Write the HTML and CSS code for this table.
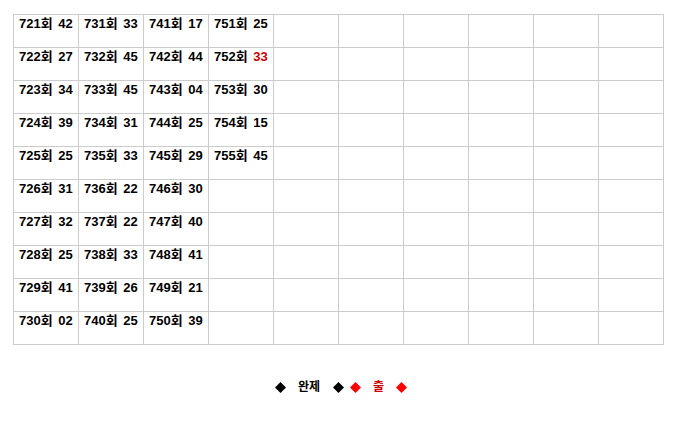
FILE: index.html
```html
<!DOCTYPE html>
<html lang="ko">
<head>
<meta charset="utf-8">
<link rel="stylesheet" href="styles.css">
</head>
<body>
<table class="grid">
<tr><td>721회 42</td><td>731회 33</td><td>741회 17</td><td>751회 25</td><td></td><td></td><td></td><td></td><td></td><td></td></tr>
<tr><td>722회 27</td><td>732회 45</td><td>742회 44</td><td>752회 <span class="hit">33</span></td><td></td><td></td><td></td><td></td><td></td><td></td></tr>
<tr><td>723회 34</td><td>733회 45</td><td>743회 04</td><td>753회 30</td><td></td><td></td><td></td><td></td><td></td><td></td></tr>
<tr><td>724회 39</td><td>734회 31</td><td>744회 25</td><td>754회 15</td><td></td><td></td><td></td><td></td><td></td><td></td></tr>
<tr><td>725회 25</td><td>735회 33</td><td>745회 29</td><td>755회 45</td><td></td><td></td><td></td><td></td><td></td><td></td></tr>
<tr><td>726회 31</td><td>736회 22</td><td>746회 30</td><td></td><td></td><td></td><td></td><td></td><td></td><td></td></tr>
<tr><td>727회 32</td><td>737회 22</td><td>747회 40</td><td></td><td></td><td></td><td></td><td></td><td></td><td></td></tr>
<tr><td>728회 25</td><td>738회 33</td><td>748회 41</td><td></td><td></td><td></td><td></td><td></td><td></td><td></td></tr>
<tr><td>729회 41</td><td>739회 26</td><td>749회 21</td><td></td><td></td><td></td><td></td><td></td><td></td><td></td></tr>
<tr><td>730회 02</td><td>740회 25</td><td>750회 39</td><td></td><td></td><td></td><td></td><td></td><td></td><td></td></tr>
</table>
<div class="legend">
<svg class="dia" viewBox="0 0 11 11"><polygon points="5.5,0 11,5.5 5.5,11 0,5.5" fill="#000"/></svg>
<span class="lbl">완제</span>
<svg class="dia d2" viewBox="0 0 11 11"><polygon points="5.5,0 11,5.5 5.5,11 0,5.5" fill="#000"/></svg>
<svg class="dia d3" viewBox="0 0 11 11"><polygon points="5.5,0 11,5.5 5.5,11 0,5.5" fill="#ff0000"/></svg>
<span class="lbl red2">출</span>
<svg class="dia" viewBox="0 0 11 11"><polygon points="5.5,0 11,5.5 5.5,11 0,5.5" fill="#ff0000"/></svg>
</div>
</body>
</html>
```
FILE: styles.css
```css
body {
  margin: 14px 0 0 13px;
  font-family: "Liberation Sans", "Noto Sans CJK KR", sans-serif;
  font-size: 13px;
  font-weight: bold;
  color: #000;
}
.grid {
  border-collapse: collapse;
  table-layout: fixed;
  width: 651px;
}
.grid td {
  width: 64px;
  height: 33px;
  box-sizing: border-box;
  border: 1px solid #cccccc;
  padding: 1px 0 0 5px;
  vertical-align: top;
  line-height: 15px;
  white-space: nowrap;
  word-spacing: 2px;
}
.hit { color: #cc0000; }
.legend {
  width: 651px;
  box-sizing: border-box;
  padding-left: 5px;
  margin-top: 35px;
  display: flex;
  justify-content: center;
  align-items: center;
  height: 14px;
  font-size: 12px;
  line-height: 14px;
}
.dia { width: 11px; height: 11px; display: block; flex: none; }
.lbl { margin: 0 12px; }
.d2 { margin-left: 1px; }
.d3 { margin-left: 6px; }
.red2 { color: #cc0000; }
```
